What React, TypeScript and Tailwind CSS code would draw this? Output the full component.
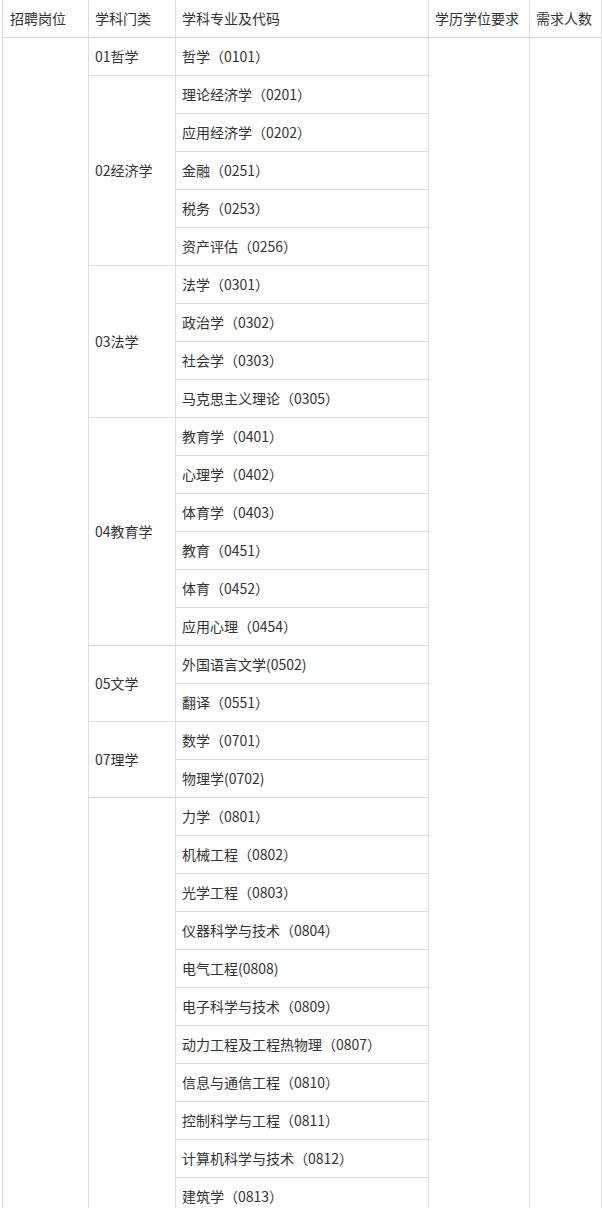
import React from 'react';

type Group = { name: string; majors: string[] };

const groups: Group[] = [
  { name: '01哲学', majors: ['哲学（0101）'] },
  {
    name: '02经济学',
    majors: ['理论经济学（0201）', '应用经济学（0202）', '金融（0251）', '税务（0253）', '资产评估（0256）'],
  },
  { name: '03法学', majors: ['法学（0301）', '政治学（0302）', '社会学（0303）', '马克思主义理论（0305）'] },
  {
    name: '04教育学',
    majors: ['教育学（0401）', '心理学（0402）', '体育学（0403）', '教育（0451）', '体育（0452）', '应用心理（0454）'],
  },
  { name: '05文学', majors: ['外国语言文学(0502)', '翻译（0551）'] },
  { name: '07理学', majors: ['数学（0701）', '物理学(0702)'] },
  {
    name: '',
    majors: [
      '力学（0801）',
      '机械工程（0802）',
      '光学工程（0803）',
      '仪器科学与技术（0804）',
      '电气工程(0808)',
      '电子科学与技术（0809）',
      '动力工程及工程热物理（0807）',
      '信息与通信工程（0810）',
      '控制科学与工程（0811）',
      '计算机科学与技术（0812）',
      '建筑学（0813）',
    ],
  },
];

const totalRows = groups.reduce((n, g) => n + g.majors.length, 0);

const cell = 'border border-[#dcdce2] h-[38px] px-[6px] pt-0 pb-[2px] align-middle text-left font-normal';

export default function App() {
  return (
    <div className="bg-white min-h-screen overflow-hidden">
      <table
        className="ml-[2px] -mt-px w-[599px] table-fixed border-collapse text-[14px] leading-[20px] text-[#333]"
        style={{ fontFamily: '"Noto Sans CJK SC", "Noto Sans", sans-serif' }}
      >
        <colgroup>
          <col className="w-[86px]" />
          <col className="w-[87px]" />
          <col className="w-[253px]" />
          <col className="w-[101px]" />
          <col className="w-[72px]" />
        </colgroup>
        <thead>
          <tr>
            <th className={`${cell} pl-[7px]`}>招聘岗位</th>
            <th className={cell}>学科门类</th>
            <th className={cell}>学科专业及代码</th>
            <th className={`${cell} whitespace-nowrap`}>学历学位要求</th>
            <th className={`${cell} whitespace-nowrap`}>需求人数</th>
          </tr>
        </thead>
        <tbody>
          {groups.map((g, gi) =>
            g.majors.map((m, mi) => (
              <tr key={`${gi}-${mi}`}>
                {gi === 0 && mi === 0 && <td rowSpan={totalRows} className={cell} />}
                {mi === 0 && (
                  <td rowSpan={g.majors.length} className={cell}>
                    {g.name}
                  </td>
                )}
                <td className={`${cell} whitespace-nowrap`}>{m}</td>
                {gi === 0 && mi === 0 && <td rowSpan={totalRows} className={cell} />}
                {gi === 0 && mi === 0 && <td rowSpan={totalRows} className={cell} />}
              </tr>
            )),
          )}
        </tbody>
      </table>
    </div>
  );
}
